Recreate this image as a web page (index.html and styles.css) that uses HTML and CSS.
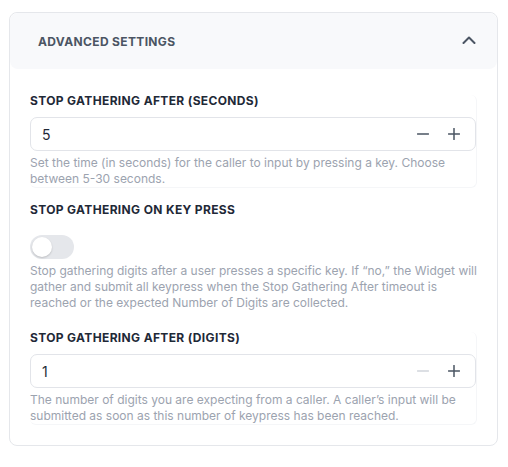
FILE: index.html
```html
<!DOCTYPE html>
<html>
<head>
<meta charset="utf-8">
<link rel="stylesheet" href="styles.css">
</head>
<body>
<div class="card">
  <div class="card-header">
    <span class="card-title">ADVANCED SETTINGS</span>
    <svg class="chevron" width="14" height="8" viewBox="0 0 14 8"><path d="M1.5 7L7 1.5L12.5 7" fill="none" stroke="#4b5563" stroke-width="2" stroke-linecap="round" stroke-linejoin="round"/></svg>
  </div>
  <div class="card-body">
    <div class="field field-first">
      <div class="label">STOP GATHERING AFTER (SECONDS)</div>
      <div class="number-input">
        <span class="value">5</span>
        <span class="steppers">
          <svg width="12" height="12" viewBox="0 0 12 12"><path d="M0.5 6H11.5" stroke="#4b5563" stroke-width="1.5" stroke-linecap="round"/></svg>
          <svg width="12" height="12" viewBox="0 0 12 12"><path d="M0.5 6H11.5M6 0.5V11.5" stroke="#4b5563" stroke-width="1.5" stroke-linecap="round"/></svg>
        </span>
      </div>
      <p class="help">Set the time (in seconds) for the caller to input by pressing a key. Choose between 5-30 seconds.</p>
    </div>
    <div class="field-toggle">
      <div class="label">STOP GATHERING ON KEY PRESS</div>
      <div class="toggle"><span class="knob"></span></div>
      <p class="help">Stop gathering digits after a user presses a specific key. If “no,” the Widget will gather and submit all keypress when the Stop Gathering After timeout is reached or the expected Number of Digits are collected.</p>
    </div>
    <div class="field field-last">
      <div class="label">STOP GATHERING AFTER (DIGITS)</div>
      <div class="number-input">
        <span class="value">1</span>
        <span class="steppers">
          <svg width="12" height="12" viewBox="0 0 12 12"><path d="M0.5 6H11.5" stroke="#d1d5db" stroke-width="1.5" stroke-linecap="round"/></svg>
          <svg width="12" height="12" viewBox="0 0 12 12"><path d="M0.5 6H11.5M6 0.5V11.5" stroke="#4b5563" stroke-width="1.5" stroke-linecap="round"/></svg>
        </span>
      </div>
      <p class="help">The number of digits you are expecting from a caller. A caller’s input will be submitted as soon as this number of keypress has been reached.</p>
    </div>
  </div>
</div>
</body>
</html>
```

FILE: styles.css
```css
* { box-sizing: border-box; }
html, body { margin: 0; padding: 0; background: #ffffff; }
body {
  font-family: Inter, "Noto Sans", sans-serif;
  padding: 12px 10px 0 9px;
}
.card {
  border: 1px solid #e5e7eb;
  border-radius: 8px;
  width: 489px;
  height: 434px;
  background: #fff;
}
.card-header {
  background: #f8f9fb;
  border-radius: 8px;
  height: 56px;
  display: flex;
  align-items: center;
  justify-content: space-between;
  padding: 0 21px 0 28px;
}
.card-title {
  font-size: 12px;
  font-weight: 700;
  color: #4b5563;
  letter-spacing: 0.35px;
}
.chevron { display: block; margin-top: -2px; }
.card-body {
  padding: 26px 20px 0 20px;
}
.field {
  border-right: 1px solid #f5f6f8;
  border-bottom: 1px solid #f5f6f8;
  border-radius: 6px;
}
.field-first { height: 93px; padding-top: 1px; }
.field-toggle { margin-top: 16px; margin-right: -3px; }
.field-last { margin-top: 21px; padding-top: 1px; }
.label {
  font-size: 12px;
  line-height: 12px;
  font-weight: 700;
  color: #1f2937;
  letter-spacing: 0.35px;
  margin-top: -1px;
}
.field-toggle .label { margin-top: 0; }
.number-input {
  margin-top: 10px;
  height: 34px;
  border: 1px solid #e2e4e9;
  border-radius: 7px;
  display: flex;
  align-items: center;
  justify-content: space-between;
  padding: 0 15px 0 11px;
}
.value {
  font-size: 14px;
  color: #1f2937;
}
.steppers {
  display: flex;
  gap: 19px;
  align-items: center;
}
.steppers svg { display: block; }
.help {
  margin: 4px 0 0 0;
  font-size: 12px;
  line-height: 16px;
  color: #9ca3af;
}
.toggle {
  margin-top: 19px;
  width: 44px;
  height: 24px;
  border-radius: 12px;
  background: #e5e7eb;
  position: relative;
}
.knob {
  position: absolute;
  left: 2px;
  top: 2px;
  width: 20px;
  height: 20px;
  border-radius: 50%;
  background: #fff;
  box-shadow: 0 1px 2px rgba(0,0,0,0.18);
}
```
